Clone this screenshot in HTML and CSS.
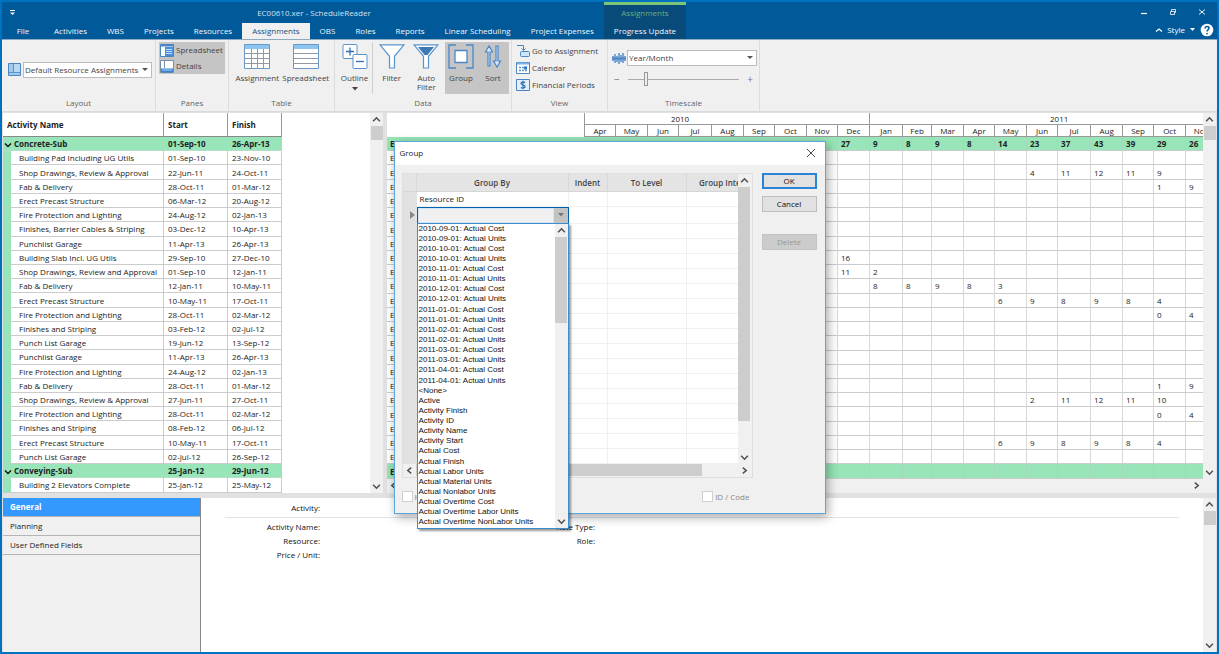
FILE: index.html
```html
<!DOCTYPE html>
<html lang="en">
<head>
<meta charset="utf-8">
<title>EC00610.xer - ScheduleReader</title>
<link rel="stylesheet" href="styles.css">
</head>
<body>
<svg class="sprite" aria-hidden="true">
  <symbol id="up" viewBox="0 0 8 8"><path d="M1 5.500 4 2.500 7 5.500" fill="none" stroke="#505050" stroke-width="1.400"/></symbol>
  <symbol id="down" viewBox="0 0 8 8"><path d="M1 2.500 4 5.500 7 2.500" fill="none" stroke="#505050" stroke-width="1.400"/></symbol>
  <symbol id="mark" viewBox="0 0 8 8"><path d="M1 2.500 4 5.500 7 2.500" fill="none" stroke="#111" stroke-width="1.400"/></symbol>
  <symbol id="left" viewBox="0 0 8 8"><path d="M5.500 1.500 2.500 4l3 2.500" fill="none" stroke="#505050" stroke-width="1.400"/></symbol>
  <symbol id="right" viewBox="0 0 8 8"><path d="M2.500 1.500 5.500 4l-3 2.500" fill="none" stroke="#505050" stroke-width="1.400"/></symbol>
</svg>
<header class="top">
  <div class="top-left">
    <div class="title-row">
      <svg class="qat" width="6" height="6" viewBox="0 0 6 6"><path d="M0 .5h5" stroke="#fff"/><path d="M0 2.500h5L2.500 5z" fill="#fff"/></svg>
      <span class="title">EC00610.xer - ScheduleReader</span>
    </div>
    <nav class="tabs">
      <button class="tab tab-file">File</button>
      <button class="tab">Activities</button>
      <button class="tab">WBS</button>
      <button class="tab">Projects</button>
      <button class="tab">Resources</button>
      <button class="tab tab-active">Assignments</button>
      <button class="tab">OBS</button>
      <button class="tab">Roles</button>
      <button class="tab">Reports</button>
      <button class="tab">Linear Scheduling</button>
      <button class="tab">Project Expenses</button>
    </nav>
  </div>
  <div class="context">
    <span class="context-title">Assignments</span>
    <button class="tab">Progress Update</button>
  </div>
  <div class="top-right">
    <div class="window-buttons">
      <button class="bare" aria-label="Minimize"><svg width="8" height="8" viewBox="0 0 8 8"><path d="M1 5.500h6" stroke="#fff" stroke-width="1.200"/></svg></button>
      <button class="bare" aria-label="Restore"><svg width="8" height="8" viewBox="0 0 8 8" fill="none" stroke="#fff" stroke-width=".8"><path d="M1.500 3.500h4v3h-4zM2.500 3.500v-2h4v3h-1"/></svg></button>
      <button class="bare" aria-label="Close"><svg width="8" height="8" viewBox="0 0 8 8"><path d="M1 1.500l6 5M7 1.500l-6 5" stroke="#fff" stroke-width=".9"/></svg></button>
    </div>
    <div class="style-row">
      <button class="bare" aria-label="Collapse ribbon"><svg width="8" height="6" viewBox="0 0 8 6"><path d="M1 4.500 4 2l3 2.500" fill="none" stroke="#fff" stroke-width="1.200"/></svg></button>
      <button class="bare style-button">Style<svg width="6" height="4" viewBox="0 0 6 4"><path d="M0 0h5L2.500 3z" fill="#fff"/></svg></button>
      <button class="bare" aria-label="Help"><svg width="14" height="14" viewBox="0 0 14 14"><circle cx="7" cy="7" r="6.300" fill="#fff"/><path d="M5 5.500c0-2.600 4-2.400 4-.2C9 6.600 7 6.700 7 8.500" fill="none" stroke="#005999" stroke-width="1.500"/><circle cx="7" cy="10.600" r=".9" fill="#005999"/></svg></button>
    </div>
  </div>
</header>

<section class="ribbon">
  <div class="group g-layout">
    <div class="group-body layout-body">
      <svg width="13" height="13" viewBox="0 0 13 13"><path d="M.5.500h12v12H.5z" fill="#9fc9ee" stroke="#4a86c0"/><path d="M5.500 1v8M1 9.500h11" stroke="#5b94cb"/><path d="M6 1h6v8H6z" fill="#b9d9f3"/></svg>
      <span class="select-wrap layout-select"><select aria-label="Layout"><option>Default Resource Assignments</option></select></span>
    </div>
    <div class="group-name">Layout</div>
  </div>
  <div class="group g-panes">
    <div class="group-body panes-body">
      <button class="small-button"><svg width="14" height="13" viewBox="0 0 14 13"><path d="M.5.500h13v12H.5z" fill="#fff" stroke="#4a86c0"/><path d="M.5 1.500h13" stroke="#4a86c0" stroke-width="2"/><path d="M5 3h8v9H5z" fill="#4a8fd8"/><path d="M6 5.500h6M6 7.500h6M6 9.500h6" stroke="#b9dcff"/></svg>Spreadsheet</button>
      <button class="small-button"><svg width="14" height="13" viewBox="0 0 14 13"><path d="M.5.500h13v12H.5z" fill="#fff" stroke="#7a8ea3"/><path d="M4.500 1v7" stroke="#7a8ea3"/><path d="M1 8.500h12v4H1z" fill="#3c84cf"/><path d="M2 10h10" stroke="#a8d0f5"/></svg>Details</button>
    </div>
    <div class="group-name">Panes</div>
  </div>
  <div class="group g-table">
    <div class="group-body big-body">
      <button class="big-button b-wide"><svg width="26" height="25" viewBox="0 0 26 25"><path d="M.5.500h25v24H.5z" fill="#fff" stroke="#6a97c4"/><path d="M1 1h24v4H1z" fill="#8cc4f2"/><path d="M1 9.500h24M1 14.500h24M1 19.500h24M7.500 5v19M13.500 5v19M19.500 5v19" stroke="#8f9aa5"/></svg>Assignment</button>
      <button class="big-button b-wide"><svg width="26" height="25" viewBox="0 0 26 25"><path d="M.5.500h25v24H.5z" fill="#fff" stroke="#6a97c4"/><path d="M1 1h24v4H1z" fill="#8cc4f2"/><path d="M1 9.500h24M1 14.500h24M1 19.500h24" stroke="#8f9aa5"/></svg>Spreadsheet</button>
    </div>
    <div class="group-name">Table</div>
  </div>
  <div class="group g-data">
    <div class="group-body big-body">
      <button class="big-button b-outline"><svg width="26" height="25" viewBox="0 0 26 25" fill="#fff" stroke="#5a93cc"><rect x="1" y=".5" width="14" height="14" rx="1"/><path d="M8 3.500v8M4 7.500h8" stroke="#2f6fb0" stroke-width="1.300"/><rect x="11" y="10.500" width="14" height="14" rx="1"/><path d="M14 17.500h8" stroke="#2f6fb0" stroke-width="1.300"/></svg>Outline<svg class="caret" width="6" height="4" viewBox="0 0 6 4"><path d="M0 0h6L3 3.500z" fill="#444"/></svg></button>
      <button class="big-button b-filter"><svg width="26" height="25" viewBox="0 0 26 25"><path d="M1 .8h24l-9.500 11.500V24h-5V12.300z" fill="#fff" stroke="#5a93cc" stroke-width="1.200"/></svg>Filter</button>
      <button class="big-button b-filter"><svg width="26" height="25" viewBox="0 0 26 25"><path d="M1 .8h24l-9.500 11.500V24h-5V12.300z" fill="#fff" stroke="#5a93cc" stroke-width="1.200"/><path d="M5 3h16l-6.500 8h-3z" fill="#3d7ab5"/></svg>Auto<br>Filter</button>
      <div class="pressed">
        <button class="big-button b-narrow"><svg width="26" height="25" viewBox="0 0 26 25" fill="none" stroke="#4a86c8" stroke-width="1.300"><path d="M8 1H1v23h7M18 1h7v23h-7"/><path d="M7 6.500h12v12H7z" fill="#fff"/></svg>Group</button>
        <button class="big-button b-narrow"><svg width="18" height="25" viewBox="0 0 18 25" fill="none" stroke="#4a86c8" stroke-width="1.200"><path d="M4 22V8H1.500L5 2l3.500 6H6v14zM12 2v15H9.500l3.500 6 3.500-6H14V2z" fill="#d9e9f8"/></svg>Sort</button>
      </div>
    </div>
    <div class="group-name">Data</div>
  </div>
  <div class="group g-view">
    <div class="group-body view-body">
      <button class="small-button"><svg width="14" height="13" viewBox="0 0 14 13" fill="none" stroke="#4a86c0"><path d="M1 1.500h6.500V6M5.500 4.500l2 2 2-2"/><rect x="4.500" y="7.500" width="9" height="5" rx="1" fill="#cfe5f8"/></svg>Go to Assignment</button>
      <button class="small-button"><svg width="14" height="13" viewBox="0 0 14 13"><path d="M.5 1.500h13v11H.5z" fill="#fff" stroke="#4a86c0"/><path d="M1 2.500h12" stroke="#7db2e5" stroke-width="2"/><path d="M3 6.500h8M3 9.500h8" stroke="#5b94cb" stroke-width="1.500" stroke-dasharray="2 1"/><path d="M8 5.500h3v3H8z" fill="#2f7bc8"/></svg>Calendar</button>
      <button class="small-button"><svg width="14" height="13" viewBox="0 0 14 13"><path d="M.5 1.500h13v11H.5z" fill="#e3f0fb" stroke="#4a86c0"/><path d="M9.200 4.600C7.500 3.400 4.800 4 5 5.700c.3 1.600 4 1 4.200 2.600.2 1.700-2.700 2.300-4.400 1.100M7 2.800v8.400" fill="none" stroke="#2f6fb0" stroke-width="1.200"/></svg>Financial Periods</button>
    </div>
    <div class="group-name">View</div>
  </div>
  <div class="group g-time">
    <div class="group-body time-body">
      <div class="time-row">
        <svg width="14" height="13" viewBox="0 0 14 13"><path d="M1 4v5M3 2v9M5 4v6M7 1v11M9 3v7M11 1v10M13 4v5" stroke="#4a86c8" stroke-width="1.400"/><path d="M0 6.500h14" stroke="#4a86c8" stroke-width="2"/></svg>
        <span class="select-wrap time-select"><select aria-label="Timescale"><option>Year/Month</option></select></span>
      </div>
      <div class="slider-row"><span>−</span><input type="range" aria-label="Zoom" min="0" max="100" value="15"><span>+</span></div>
    </div>
    <div class="group-name">Timescale</div>
  </div>
</section>

<main class="workspace">
  <div class="upper">
    <section class="pane pane-left">
      <div class="table-area"><table class="activities">
        <thead><tr><th class="c-name">Activity Name</th><th class="c-date">Start</th><th class="c-finish">Finish</th></tr></thead>
        <tbody id="activities"></tbody>
      </table></div>
      <div class="vbar"><svg class="arrow"><use href="#up"/></svg><div class="thumb"></div><div class="space"></div><svg class="arrow"><use href="#down"/></svg></div>
    </section>
    <section class="pane pane-right">
      <div class="sheet">
        <div class="sheet-view"><table class="timeline" id="timeline"></table></div>
        <div class="hbar"><svg class="arrow"><use href="#left"/></svg><div class="space"></div><svg class="arrow"><use href="#right"/></svg></div>
      </div>
      <div class="vbar"><svg class="arrow"><use href="#up"/></svg><div class="thumb"></div><div class="space"></div><svg class="arrow arrow-above-corner"><use href="#down"/></svg></div>
    </section>
  </div>
  <div class="lower">
    <nav class="side">
      <button class="side-tab side-active">General</button>
      <button class="side-tab">Planning</button>
      <button class="side-tab">User Defined Fields</button>
    </nav>
    <section class="details">
      <div class="detail-head"><span class="field">Activity:</span></div>
      <div class="detail-cols">
        <div class="detail-col"><span class="field">Activity Name:</span><span class="field">Resource:</span><span class="field">Price / Unit:</span></div>
        <div class="detail-col detail-second"><span class="field">Rate Type:</span><span class="field">Role:</span></div>
      </div>
    </section>
    <div class="vbar"><svg class="arrow"><use href="#up"/></svg><div class="thumb"></div><div class="space"></div><svg class="arrow"><use href="#down"/></svg></div>
  </div>
</main>

<div class="dialog" role="dialog" aria-labelledby="dialog-title">
  <div class="dialog-title"><span id="dialog-title">Group</span><button class="bare" aria-label="Close"><svg width="8" height="8" viewBox="0 0 8 8"><path d="M0 0l8 8M8 0l-8 8" stroke="#333" stroke-width=".9"/></svg></button></div>
  <div class="dialog-body">
    <div class="dialog-main">
      <div class="group-frame">
        <div class="frame-top">
          <div class="group-view"><table class="group-table">
            <colgroup><col class="k-mark"><col class="k-by"><col class="k-indent"><col class="k-level"><col class="k-interval"></colgroup>
            <thead><tr><th></th><th>Group By</th><th>Indent</th><th>To Level</th><th>Group Interval</th></tr></thead>
            <tbody id="groups"></tbody>
          </table></div>
          <div class="vbar"><svg class="arrow"><use href="#up"/></svg><div class="thumb thumb-long"></div><div class="space"></div><svg class="arrow"><use href="#down"/></svg></div>
        </div>
        <div class="hbar dialog-hbar"><svg class="arrow"><use href="#left"/></svg><div class="h-thumb"></div><div class="space"></div><svg class="arrow"><use href="#right"/></svg></div>
      </div>
      <div class="checks">
        <label><input type="checkbox">H</label>
        <label class="check-code"><input type="checkbox">ID / Code</label>
      </div>
    </div>
    <div class="dialog-buttons">
      <button class="push push-default">OK</button>
      <button class="push">Cancel</button>
      <button class="push push-delete" disabled>Delete</button>
    </div>
  </div>
  <div class="dropdown">
    <ul class="options" id="options" role="listbox"></ul>
    <div class="vbar"><svg class="arrow"><use href="#up"/></svg><div class="thumb thumb-list"></div><div class="space"></div><svg class="arrow"><use href="#down"/></svg></div>
  </div>
</div>
<script src="app.js"></script>
</body>
</html>
```

FILE: styles.css
```css
* { box-sizing: border-box; }
html { height: 100%; }
body {
  margin: 0;
  height: 100%;
  position: relative;
  display: flex;
  flex-direction: column;
  overflow: hidden;
  border: 2px solid #0070c0;
  background: #f0f0f0;
  color: #222;
  font: 8px/12px "Open Sans", "Noto Sans", sans-serif;
}
button, select, input { font: inherit; color: inherit; margin: 0; }
button { border: 0; background: none; padding: 0; }
.sprite { display: none; }

/* title bar and tabs */
.top { display: flex; background: #005999; color: #fff; height: 38px; flex: none; border-bottom: 1px solid #8ea9c2; }
.top-left, .context { display: flex; flex-direction: column; }
.title-row { display: flex; height: 21px; align-items: center; padding-left: 8px; }
.title { flex: 1; text-align: center; color: #d3e2ee; padding-left: 8px; }
.tabs { display: flex; height: 16px; }
.tab { padding: 0 10px; height: 16px; line-height: 16px; white-space: nowrap; color: #f2f6fa; }
.tab-file { width: 42px; }
.tab-active { background: #f0f0f0; color: #1f4e79; }
.context { background: #084a7a; border-top: 3px solid #7cc576; }
.context-title { height: 18px; line-height: 15px; text-align: center; color: #6fae7c; }
.top-right { flex: 1; display: flex; flex-direction: column; align-items: flex-end; }
.window-buttons { display: flex; gap: 21px; height: 20px; align-items: center; padding-right: 11px; }
.bare { display: flex; align-items: center; }
.style-row { display: flex; gap: 4px; height: 16px; align-items: center; padding-right: 3px; }
.style-button { gap: 5px; }

/* ribbon */
.ribbon { display: flex; height: 72px; flex: none; border-bottom: 1px solid #dadada; color: #444; }
.group { display: flex; flex-direction: column; border-right: 1px solid #dcdcdc; padding-top: 2px; }
.group-body { flex: 1; display: flex; }
.group-name { text-align: center; height: 14px; color: #666; }
.g-layout { width: 154px; }
.g-panes { width: 73px; }
.g-table { width: 106px; }
.g-data { width: 177px; }
.g-view { width: 96px; }
.g-time { width: 152px; }
.layout-body { align-items: center; gap: 2px; padding: 0 3px 0 6px; }
.select-wrap { position: relative; display: block; flex: 1; }
.select-wrap::after { content: ""; position: absolute; right: 4px; top: 6px; border: 3px solid transparent; border-top-color: #555; border-bottom: 0; pointer-events: none; }
.select-wrap select { appearance: none; width: 100%; height: 16px; padding: 0 0 0 1px; border: 1px solid #bcbcbc; border-radius: 0; background: #fff; color: #444; }
.panes-body { flex-direction: column; align-items: center; }
.small-button { display: flex; align-items: center; gap: 2px; height: 17px; white-space: nowrap; }
.panes-body .small-button { width: 66px; height: 16px; background: #c5c5c5; padding-left: 1px; }
.big-body { align-items: flex-start; padding: 0 4px; }
.g-table .big-body { justify-content: center; }
.big-button { display: flex; flex-direction: column; align-items: center; height: 52px; padding-top: 2px; line-height: 9px; }
.big-button > svg:first-child { margin-bottom: 4px; }
.b-wide { width: 49px; }
.b-outline { width: 36px; border-right: 1px solid #cfcfcf; }
.b-outline .caret { margin-top: 5px; }
.g-data .big-body { padding: 0 2px; justify-content: space-between; }
.b-filter { width: 32px; }
.b-narrow { width: 32px; }
.pressed { display: flex; background: #c5c5c5; }
.view-body { flex-direction: column; padding-left: 4px; }
.view-body .small-button { height: 17px; }
.time-body { flex-direction: column; padding: 8px 2px 0 4px; }
.time-row { display: flex; gap: 1px; align-items: center; }
.slider-row { display: flex; align-items: center; justify-content: space-between; height: 26px; padding: 0 4px 0 2px; color: #777; font-size: 10px; }
.slider-row input { appearance: none; width: 111px; height: 14px; background: linear-gradient(#aaa, #aaa) center / 100% 1px no-repeat; }
.slider-row input::-webkit-slider-thumb { appearance: none; width: 4px; height: 14px; background: #eee; border: 1px solid #999; }

/* workspace */
.workspace { flex: 1; min-height: 0; display: grid; grid-template-columns: minmax(0, 1fr); grid-template-rows: minmax(0, 32fr) minmax(0, 13fr); row-gap: 5px; padding: 1px 1px 0; background: #e1e1e1; }
.upper { display: flex; gap: 4px; min-height: 0; }
.pane { display: flex; background: #fff; min-width: 0; }
.pane-left { width: 380px; flex: none; }
.pane-right { flex: 1; }
.table-area { flex: 1; }
.vbar { width: 13px; flex: none; display: flex; flex-direction: column; align-items: center; background: #f0f0f0; }
.hbar { height: 14px; flex: none; display: flex; align-items: center; background: #f0f0f0; }
.dialog-hbar { height: 13px; }
.arrow { width: 13px; height: 13px; padding: 2px; flex: none; }
.arrow-above-corner { margin-bottom: 14px; }
.space { flex: 1; }
.thumb { width: 12px; height: 14px; background: #cdcdcd; }

table { border-collapse: separate; border-spacing: 0; table-layout: fixed; }
th, td { padding: 0; line-height: 13px; white-space: nowrap; overflow: hidden; text-align: left; font-weight: 400; }
.activities { height: 100%; width: 279px; }
.activities th { height: 24px; font-weight: 700; border-right: 1px solid #999; border-bottom: 1px solid #888; padding-left: 4px; }
.activities td { border-right: 1px solid #ccc; border-bottom: 1px solid #ccc; padding-left: 4px; }
.c-name { width: 161px; }
.c-date { width: 64px; }
.c-finish { width: 54px; }
.activities td.child { border-left: 8px solid #97e5b8; padding-left: 8px; }
.group-row td { background: #97e5b8; font-weight: 700; border-right-color: #97e5b8; border-bottom-color: #b5dec6; }
.activities .group-row td { border-right-color: #97e5b8; border-bottom-color: #b5dec6; }
.activities .group-row td:first-child { padding-left: 1px; }
.group-row svg { width: 8px; height: 8px; margin-right: 2px; vertical-align: middle; }

.sheet { flex: 1; min-width: 0; display: flex; flex-direction: column; }
.sheet-view { flex: 1; min-height: 0; overflow: hidden; }
.timeline { height: 100%; width: 0; }
.timeline .label { width: 198px; }
.timeline th { height: 12px; line-height: 11px; text-align: center; border-right: 1px solid #999; border-bottom: 1px solid #999; }
.timeline th.corner { border-color: #999; border-bottom: 0; }
.timeline th.year-cut { padding-right: 94px; }
.timeline td { padding-left: 3px; border-right: 1px solid #d8d8d8; border-bottom: 1px solid #ccc; }
.timeline .group-row td { border-right-color: #a3d9b9; }

/* details */
.lower { display: flex; background: #fff; min-height: 0; }
.side { width: 198px; display: flex; flex-direction: column; background: #f0f0f0; border-right: 1px solid #888; }
.side-tab { height: 19px; padding-left: 7px; text-align: left; border-bottom: 1px solid #b5b5b5; }
.side-active { background: #3399ff; color: #fff; font-weight: 700; }
.details { flex: 1; padding: 0 24px; }
.detail-head { height: 20px; padding-top: 3px; border-bottom: 1px solid #e3e3e3; }
.detail-cols { display: flex; padding-top: 2px; gap: 180px; }
.detail-col { display: flex; flex-direction: column; }
.field { display: block; width: 95px; line-height: 14px; text-align: right; color: #111; }

/* group dialog */
.dialog { position: absolute; inset: 0; margin: auto; width: 432px; height: 373px; display: flex; flex-direction: column; background: #f0f0f0; border: 1px solid #5aa5dc; box-shadow: 2px 3px 10px rgba(0, 0, 0, .35); }
.dialog-title { display: flex; justify-content: space-between; align-items: center; height: 23px; padding: 0 10px 0 5px; background: #fff; flex: none; }
.dialog-body { flex: 1; min-height: 0; display: flex; padding: 8px 8px 10px 7px; gap: 9px; }
.dialog-main { flex: 1; min-width: 0; display: flex; flex-direction: column; }
.group-frame { flex: 1; min-height: 0; display: flex; flex-direction: column; border: 1px solid #dfdfdf; padding-right: 1px; }
.frame-top { flex: 1; min-height: 0; display: flex; }
.group-view { flex: 1; min-width: 0; overflow: hidden; background: #fff; }
.group-table { width: 366px; }
.group-table th { height: 18px; background: #e4e4e4; text-align: center; border-right: 1px solid #d8d8d8; border-bottom: 1px solid #d5d5d5; color: #444; font-weight: 600; }
.group-table td { height: 15px; border-right: 1px solid #f0f0f0; border-bottom: 1px solid #f0f0f0; padding-left: 3px; }
.group-table td:first-child { background: #e1e1e1; border-color: #e1e1e1; padding: 0; }
.pointer { display: block; width: 5px; height: 8px; margin-left: 7px; }
.group-table td.editing { padding: 0; border: 0; height: 17px; }
.k-mark { width: 14px; }
.k-by { width: 152px; }
.k-indent { width: 39px; }
.k-level { width: 79px; }
.k-interval { width: 82px; }
.combo { display: flex; height: 17px; border: 1px solid #0063b1; background: #f0f0f0; }
.combo input { flex: 1; min-width: 0; border: 1px solid #cfe6f8; padding: 0 2px; background: #f0f0f0; }
.combo button { width: 14px; background: #c3c3c3; display: flex; align-items: center; justify-content: center; }
.thumb-long { height: 234px; }
.h-thumb { width: 286px; height: 12px; background: #cdcdcd; }
.checks { height: 25px; display: flex; align-items: flex-end; justify-content: space-between; padding-right: 3px; color: #888; }
.checks label { display: flex; align-items: center; gap: 2px; }
.checks input { appearance: none; width: 11px; height: 11px; background: #fff; border: 1px solid #d0d0d0; }
.dialog-buttons { width: 55px; display: flex; flex-direction: column; gap: 7px; }
.push { height: 16px; line-height: 12px; background: #e1e1e1; border: 1px solid #bdbdbd; color: #111; }
.push-default { border: 2px solid #2a84d6; }
.push-delete { margin-top: 15px; background: #cccccc; border-color: #c4c4c4; color: #999; }
.dropdown { position: absolute; left: 22px; top: 81px; width: 152px; height: 306px; display: flex; background: #fff; border: 1px solid #3f8ccc; box-shadow: 2px 2px 2px rgba(0, 0, 0, .4); }
.options { flex: 1; margin: 0; padding: 0 0 0 1px; list-style: none; display: grid; grid-auto-rows: 1fr; align-items: center; font-family: "Liberation Sans", Arial, sans-serif; line-height: 10px; color: #111; white-space: nowrap; }
.thumb-list { height: 86px; }
```

FILE: app.js
```js
const rows = [
  ["Concrete-Sub", "01-Sep-10", "26-Apr-13", 8, [27, 9, 8, 9, 8, 14, 23, 37, 43, 39, 29, 26]],
  ["Building Pad Including UG Utils", "01-Sep-10", "23-Nov-10"],
  ["Shop Drawings, Review & Approval", "22-Jun-11", "24-Oct-11", 14, [4, 11, 12, 11, 9]],
  ["Fab & Delivery", "28-Oct-11", "01-Mar-12", 18, [1, 9]],
  ["Erect Precast Structure", "06-Mar-12", "20-Aug-12"],
  ["Fire Protection and Lighting", "24-Aug-12", "02-Jan-13"],
  ["Finishes, Barrier Cables & Striping", "03-Dec-12", "10-Apr-13"],
  ["Punchlist Garage", "11-Apr-13", "26-Apr-13"],
  ["Building Slab Incl. UG Utils", "29-Sep-10", "27-Dec-10", 8, [16]],
  ["Shop Drawings, Review and Approval", "01-Sep-10", "12-Jan-11", 8, [11, 2]],
  ["Fab & Delivery", "12-Jan-11", "10-May-11", 9, [8, 8, 9, 8, 3]],
  ["Erect Precast Structure", "10-May-11", "17-Oct-11", 13, [6, 9, 8, 9, 8, 4]],
  ["Fire Protection and Lighting", "28-Oct-11", "02-Mar-12", 18, [0, 4]],
  ["Finishes and Striping", "03-Feb-12", "02-Jul-12"],
  ["Punch List Garage", "19-Jun-12", "13-Sep-12"],
  ["Punchlist Garage", "11-Apr-13", "26-Apr-13"],
  ["Fire Protection and Lighting", "24-Aug-12", "02-Jan-13"],
  ["Fab & Delivery", "28-Oct-11", "01-Mar-12", 18, [1, 9]],
  ["Shop Drawings, Review & Approval", "27-Jun-11", "27-Oct-11", 14, [2, 11, 12, 11, 10]],
  ["Fire Protection and Lighting", "28-Oct-11", "02-Mar-12", 18, [0, 4]],
  ["Finishes and Striping", "08-Feb-12", "06-Jul-12"],
  ["Erect Precast Structure", "10-May-11", "17-Oct-11", 13, [6, 9, 8, 9, 8, 4]],
  ["Punch List Garage", "02-Jul-12", "26-Sep-12"],
  ["Conveying-Sub", "25-Jan-12", "29-Jun-12"],
  ["Building 2 Elevators Complete", "25-Jan-12", "25-May-12"]
];
const isGroup = row => row[0].endsWith("-Sub");
const esc = text => text.replace(/&/g, "&amp;").replace(/</g, "&lt;");

document.getElementById("activities").innerHTML = rows.map(row => {
  const group = isGroup(row);
  const mark = group ? '<svg><use href="#mark"/></svg>' : "";
  return `<tr class="${group ? "group-row" : ""}"><td class="${group ? "" : "child"}">${mark}${esc(row[0])}</td><td>${row[1]}</td><td>${row[2]}</td></tr>`;
}).join("");

// Month columns are as wide as the number of days they hold.
const names = ["Jan", "Feb", "Mar", "Apr", "May", "Jun", "Jul", "Aug", "Sep", "Oct", "Nov", "Dec"];
const dayWidth = 1.038;
const months = [];
let days = 0;
for (let i = 3; i < 24; i++) {
  const length = new Date(2010, i + 1, 0).getDate();
  const start = Math.round(days * dayWidth);
  days += length;
  months.push({ name: names[i % 12], width: Math.round(days * dayWidth) - start });
}
const cols = months.map(m => `<col style="width:${m.width}px">`).join("");
const heads = months.map(m => `<th>${m.name}</th>`).join("");
const body = rows.slice(0, 24).map(row => {
  const cells = months.map((m, i) => {
    const value = row[4] && row[4][i - row[3]];
    return `<td>${value === undefined ? "" : value}</td>`;
  }).join("");
  return `<tr class="${isGroup(row) ? "group-row" : ""}"><td>E</td>${cells}</tr>`;
}).join("");
document.getElementById("timeline").innerHTML =
  `<colgroup><col class="label">${cols}</colgroup><thead><tr><th class="corner" rowspan="2"></th><th class="year-cut" colspan="9">2010</th><th colspan="12">2011</th></tr><tr>${heads}</tr></thead><tbody>${body}</tbody>`;

const combo = '<div class="combo"><input type="text" aria-label="Group by"><button aria-label="Open list"><svg width="6" height="4" viewBox="0 0 6 4"><path d="M0 0h6L3 3.500z" fill="#777"/></svg></button></div>';
const pointer = '<svg class="pointer" viewBox="0 0 5 8"><path d="M0 0l5 4-5 4z" fill="#888"/></svg>';
document.getElementById("groups").innerHTML = Array.from({ length: 18 }, (_, i) =>
  `<tr><td>${i === 1 ? pointer : ""}</td><td class="${i === 1 ? "editing" : ""}">${i === 0 ? "Resource ID" : i === 1 ? combo : ""}</td><td></td><td></td><td></td></tr>`
).join("");

const periods = ["2010-09", "2010-10", "2010-11", "2010-12", "2011-01", "2011-02", "2011-03", "2011-04"];
const options = periods.flatMap(p => [`${p}-01: Actual Cost`, `${p}-01: Actual Units`]).concat([
  "<None>", "Active", "Activity Finish", "Activity ID", "Activity Name", "Activity Start", "Actual Cost",
  "Actual Finish", "Actual Labor Units", "Actual Material Units", "Actual Nonlabor Units",
  "Actual Overtime Cost", "Actual Overtime Labor Units", "Actual Overtime NonLabor Units"
]);
document.getElementById("options").innerHTML = options.map(o => `<li role="option">${esc(o)}</li>`).join("");
```
